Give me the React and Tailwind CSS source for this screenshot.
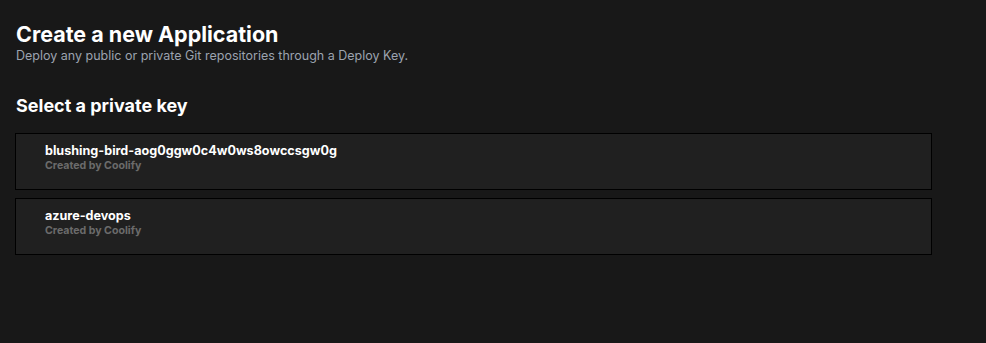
import React from 'react';

const keys = [
  { name: 'blushing-bird-aog0ggw0c4w0ws8owccsgw0g', by: 'Coolify' },
  { name: 'azure-devops', by: 'Coolify' },
];

export default function App() {
  return (
    <div
      className="min-h-[343px] w-full bg-[#181818] text-white"
      style={{ fontFamily: 'Inter, "Noto Sans", sans-serif' }}
    >
      <div className="pl-[15px] pr-[54px] pt-[20px]">
        <h1 className="pl-px text-[21.5px] font-bold leading-[28px]">Create a new Application</h1>
        <div className="pl-px text-[12.5px] leading-[16px] text-[#9ca3af]">
          Deploy any public or private Git repositories through a Deploy Key.
        </div>

        <h2 className="mt-[30px] pl-px text-[18px] font-bold leading-[24px]">Select a private key</h2>

        <div className="mt-[15px] flex flex-col gap-2">
          {keys.map((k) => (
            <div
              key={k.name}
              className="flex h-[57px] cursor-pointer border border-black bg-[#202020] hover:bg-[#262626]"
            >
              <div className="ml-[29px] mt-[8px] flex flex-col">
                <div className="text-[12.6px] font-bold leading-[17px]">{k.name}</div>
                <div className="text-[10.6px] font-bold leading-[14px] text-[#6b6b6b]">
                  Created by {k.by}
                </div>
              </div>
            </div>
          ))}
        </div>
      </div>
    </div>
  );
}
